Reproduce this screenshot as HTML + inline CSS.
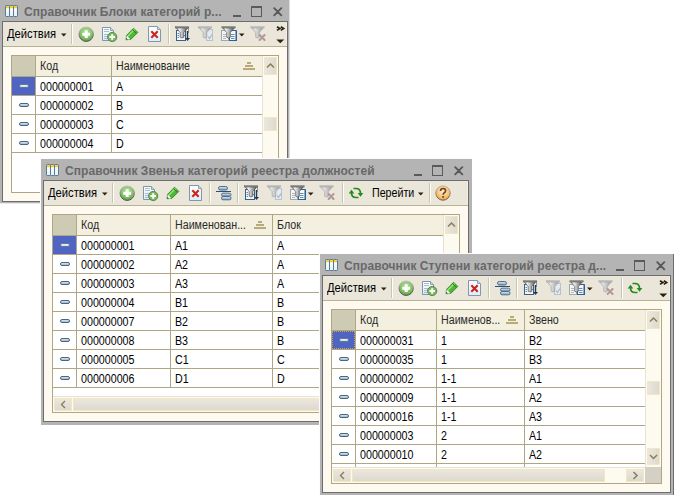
<!DOCTYPE html>
<html><head><meta charset="utf-8"><style>
html,body{margin:0;padding:0;background:#fff;width:674px;height:495px;overflow:hidden;position:relative}
div,span,svg{position:absolute}
.w div,.w span,.w svg{position:absolute}
.t{font-family:"Liberation Sans", sans-serif;white-space:pre}
</style></head><body>
<div class="w" style="left:0px;top:0px;z-index:1"><div style="left:0px;top:0px;width:289px;height:203px;background:#b4b4b4;"></div><div style="left:289px;top:0px;width:1px;height:203px;background:#dcdcdc;"></div><div style="left:0px;top:203px;width:290px;height:1px;background:#e8e8e8;"></div><svg style="left:5px;top:5px" width="14" height="12" viewBox="0 0 14 12"><defs><linearGradient id="gw" x1="0" y1="0" x2="0" y2="1"><stop offset="0" stop-color="#ffffff"/><stop offset="1" stop-color="#dff3fb"/></linearGradient></defs><rect x="0.5" y="0.5" width="4" height="11" rx="0.7" fill="url(#gw)" stroke="#62768a"/><rect x="1" y="1.2" width="3" height="2" fill="#f0d020"/><rect x="4.5" y="0.5" width="4" height="11" rx="0.7" fill="url(#gw)" stroke="#62768a"/><rect x="5" y="1.2" width="3" height="2" fill="#f0d020"/><rect x="8.5" y="0.5" width="4" height="11" rx="0.7" fill="url(#gw)" stroke="#62768a"/><rect x="9" y="1.2" width="3" height="2" fill="#f0d020"/></svg><span class="t" style="left:24px;top:5px;font-size:12px;line-height:14px;font-weight:700;color:#686868;letter-spacing:0.07px">Справочник Блоки категорий р...</span><div style="left:233px;top:15px;width:8px;height:2px;background:#5a5a5a;"></div><div style="left:251px;top:6px;width:11px;height:2px;background:#5a5a5a;"></div><div style="left:251px;top:6px;width:1px;height:11px;background:#5a5a5a;"></div><div style="left:261px;top:6px;width:1px;height:11px;background:#5a5a5a;"></div><div style="left:251px;top:16px;width:11px;height:1px;background:#5a5a5a;"></div><svg style="left:273px;top:7px" width="10" height="10" viewBox="0 0 10 10"><path d="M1.2 1.2L8.3 8.3M8.3 1.2L1.2 8.3" stroke="#585858" stroke-width="1.9" stroke-linecap="round"/></svg><div style="left:2px;top:21px;width:286px;height:181px;background:#6d6d6d;"></div><div style="left:3px;top:22px;width:284px;height:179px;background:#fefaf0;"></div><div style="left:3px;top:22px;width:284px;height:24px;background:#ebe6da;"></div><div style="left:3px;top:46px;width:284px;height:1px;background:#b8b294;"></div><div style="left:286px;top:22px;width:1px;height:24px;background:#f3efe3;"></div><span class="t" style="left:7px;top:27px;font-size:12px;line-height:14px;font-weight:400;color:#000;transform:scaleX(0.935);transform-origin:0 0;">Действия</span><svg style="left:61px;top:33px" width="6" height="4" viewBox="0 0 6 4"><path d="M0 0.5H5.5L2.75 3.5Z" fill="#2a2010"/></svg><div style="left:71px;top:24px;width:1px;height:20px;background:#c9c4ae;"></div><div style="left:72px;top:24px;width:1px;height:20px;background:#ffffff;"></div><svg style="left:78px;top:26px" width="17" height="17" viewBox="0 0 17 17"><defs><radialGradient id="gp" cx="0.5" cy="0.35" r="0.65"><stop offset="0" stop-color="#b4df9c"/><stop offset="0.6" stop-color="#88c56c"/><stop offset="1" stop-color="#5c9e45"/></radialGradient><linearGradient id="gpo" x1="0" y1="0" x2="0" y2="1"><stop offset="0" stop-color="#c0c0b8"/><stop offset="1" stop-color="#4a4a48"/></linearGradient></defs><circle cx="8.2" cy="8.2" r="7.2" fill="url(#gp)" stroke="url(#gpo)" stroke-width="1"/><path d="M8.2 4.3V12.1M4.3 8.2H12.1" stroke="#fff" stroke-width="3"/></svg><svg style="left:102px;top:27px" width="17" height="17" viewBox="0 0 17 17"><defs><linearGradient id="gd" x1="0" y1="0" x2="0" y2="1"><stop offset="0" stop-color="#ffffff"/><stop offset="1" stop-color="#dcebf6"/></linearGradient></defs><path d="M0.5 0.5H8.5L11.5 3.5V13.5H0.5Z" fill="url(#gd)" stroke="#7d95ad"/><path d="M8.5 0.5V3.5H11.5" fill="#c9d8e6" stroke="#8aa2b8"/><path d="M2 2.5H7M2 4.5H7M2 7.5H6M2 9.5H6M2 11.5H6" stroke="#a6bcd0"/><circle cx="10.2" cy="10" r="4.6" fill="#78bb5e" stroke="#4f7f44" stroke-width="0.9"/><path d="M10.2 7.2V12.8M7.4 10H13" stroke="#fff" stroke-width="2"/></svg><svg style="left:122px;top:24px" width="20" height="20" viewBox="0 0 20 20"><defs><linearGradient id="gpe" x1="0" y1="1" x2="1" y2="0" gradientTransform="rotate(0)"><stop offset="0" stop-color="#2f8f1f"/><stop offset="0.5" stop-color="#8fe070"/><stop offset="1" stop-color="#2f8f1f"/></linearGradient></defs><path d="M4 15.8L4.6 11.3L11.6 4.2L15.8 8.4L8.8 15.4Z" fill="#4cb835" stroke="#2d7d1e" stroke-width="0.8"/><path d="M5.5 12.5L12.5 5.5" stroke="#9ae27e" stroke-width="1.5"/><path d="M10.5 5.5L14.5 9.5" stroke="#2a7a1c" stroke-width="1"/><path d="M4.1 15.7L4.8 11.8L8.3 15.2Z" fill="#ffffff"/><path d="M4 15.8L4.3 13.8L6 15.5Z" fill="#1e5a14"/></svg><svg style="left:148px;top:26px" width="14" height="17" viewBox="0 0 14 17"><defs><linearGradient id="gdl" x1="0" y1="0" x2="0" y2="1"><stop offset="0" stop-color="#ffffff"/><stop offset="1" stop-color="#dcecf8"/></linearGradient></defs><path d="M0.5 0.5H9.5L12.5 3.5V15.5H0.5Z" fill="url(#gdl)" stroke="#8097ac"/><path d="M9.5 0.5V3.5H12.5" fill="#c9d8e6" stroke="#8aa2b8"/><path d="M3.3 5.3L9.7 11.7M9.7 5.3L3.3 11.7" stroke="#cc2418" stroke-width="2.1"/></svg><div style="left:168px;top:24px;width:1px;height:20px;background:#c9c4ae;"></div><div style="left:169px;top:24px;width:1px;height:20px;background:#ffffff;"></div><svg style="left:174px;top:26px" width="17" height="17" viewBox="0 0 17 17"><rect x="2.5" y="4.5" width="9" height="10" fill="#f2f7fc" stroke="#3d5f86"/><path d="M3.5 7.5H5M3.5 9.5H5M3.5 11.5H5M10 9.5H11" stroke="#6a86a8"/><defs><linearGradient id="gf0" x1="0" y1="0" x2="1" y2="0"><stop offset="0" stop-color="#9a9a9a"/><stop offset="0.3" stop-color="#f4f4f4"/><stop offset="0.62" stop-color="#a0a0a0"/><stop offset="1" stop-color="#4c4c4c"/></linearGradient><linearGradient id="gf0r" x1="0" y1="0" x2="0" y2="1"><stop offset="0" stop-color="#c8c8c8"/><stop offset="1" stop-color="#5a5a5a"/></linearGradient></defs><g transform="translate(1 0)"><path d="M0.5 1H13.5L8.8 6.6V11.2Q7 12.8 5.2 11.2V6.6Z" fill="url(#gf0)" stroke="#4e4e4e" stroke-width="0.7"/><rect x="0.3" y="0.3" width="13.4" height="1.8" fill="url(#gf0r)" stroke="#4e4e4e" stroke-width="0.4" stroke-opacity="0.7"/></g><path d="M14.5 1.5V6.5" stroke="#3a4a5a" stroke-dasharray="1 1"/><path d="M13.5 5V12.5" stroke="#1f3a5a" stroke-width="1.4"/><path d="M11 12H16L13.5 15Z" fill="#1f3a5a"/></svg><svg style="left:198px;top:26px" width="17" height="17" viewBox="0 0 17 17"><rect x="8.5" y="3.5" width="6" height="11" fill="#e6eaee" stroke="#b6c2cc"/><defs><linearGradient id="gf1" x1="0" y1="0" x2="1" y2="0"><stop offset="0" stop-color="#b4b4b4"/><stop offset="0.3" stop-color="#e6e6e6"/><stop offset="0.65" stop-color="#bcbcbc"/><stop offset="1" stop-color="#9c9c9c"/></linearGradient><linearGradient id="gf1r" x1="0" y1="0" x2="0" y2="1"><stop offset="0" stop-color="#d8d8d8"/><stop offset="1" stop-color="#a8a8a8"/></linearGradient></defs><g transform="translate(0 0)"><path d="M0.5 1H13.5L8.8 6.6V11.2Q7 12.8 5.2 11.2V6.6Z" fill="url(#gf1)" stroke="#a4a4a4" stroke-width="0.7"/><rect x="0.3" y="0.3" width="13.4" height="1.8" fill="url(#gf1r)" stroke="#a4a4a4" stroke-width="0.4" stroke-opacity="0.7"/></g><path d="M10 10.5L11.5 12.5L14 8.5" stroke="#a6b8c8" fill="none" stroke-width="1.2"/></svg><svg style="left:221px;top:26px" width="17" height="17" viewBox="0 0 17 17"><rect x="0.5" y="4.5" width="7" height="10" fill="#f2f4f6" stroke="#a0a8ae"/><rect x="8.5" y="4.5" width="6.5" height="10" fill="#f2f7fc" stroke="#2f5f95"/><path d="M15.5 4.5V15" stroke="#2f5f95"/><path d="M10 8.5H13.5M10 10.5H13.5M10 12.5H13.5" stroke="#6a8cb4"/><path d="M2 8.5H5M2 10.5H5M2 12.5H5" stroke="#b0b6ba"/><defs><linearGradient id="gf0" x1="0" y1="0" x2="1" y2="0"><stop offset="0" stop-color="#9a9a9a"/><stop offset="0.3" stop-color="#f4f4f4"/><stop offset="0.62" stop-color="#a0a0a0"/><stop offset="1" stop-color="#4c4c4c"/></linearGradient><linearGradient id="gf0r" x1="0" y1="0" x2="0" y2="1"><stop offset="0" stop-color="#c8c8c8"/><stop offset="1" stop-color="#5a5a5a"/></linearGradient></defs><g transform="translate(0.5 0)"><path d="M0.5 1H13.5L8.8 6.6V11.2Q7 12.8 5.2 11.2V6.6Z" fill="url(#gf0)" stroke="#4e4e4e" stroke-width="0.7"/><rect x="0.3" y="0.3" width="13.4" height="1.8" fill="url(#gf0r)" stroke="#4e4e4e" stroke-width="0.4" stroke-opacity="0.7"/></g></svg><svg style="left:239px;top:33px" width="6" height="4" viewBox="0 0 6 4"><path d="M0 0.5H5.5L2.75 3.5Z" fill="#2a2010"/></svg><svg style="left:250px;top:26px" width="17" height="17" viewBox="0 0 17 17"><defs><linearGradient id="gf1" x1="0" y1="0" x2="1" y2="0"><stop offset="0" stop-color="#b4b4b4"/><stop offset="0.3" stop-color="#e6e6e6"/><stop offset="0.65" stop-color="#bcbcbc"/><stop offset="1" stop-color="#9c9c9c"/></linearGradient><linearGradient id="gf1r" x1="0" y1="0" x2="0" y2="1"><stop offset="0" stop-color="#d8d8d8"/><stop offset="1" stop-color="#a8a8a8"/></linearGradient></defs><g transform="translate(0.5 0)"><path d="M0.5 1H13.5L8.8 6.6V11.2Q7 12.8 5.2 11.2V6.6Z" fill="url(#gf1)" stroke="#a4a4a4" stroke-width="0.7"/><rect x="0.3" y="0.3" width="13.4" height="1.8" fill="url(#gf1r)" stroke="#a4a4a4" stroke-width="0.4" stroke-opacity="0.7"/></g><path d="M9.6 9L14.6 14M14.6 9L9.6 14" stroke="#b39797" stroke-width="2" stroke-linecap="round"/></svg><svg style="left:276px;top:26px" width="10" height="18" viewBox="0 0 10 18"><path d="M1 0.8L3.8 2.6L1 4.4M4.8 0.8L7.6 2.6L4.8 4.4" fill="none" stroke="#2a2010" stroke-width="1.7"/><path d="M0.3 13.6H8.2L4.25 17.3Z" fill="#2a2010"/></svg><div style="left:11px;top:55px;width:268px;height:138px;background:#aea685;"></div><div style="left:12px;top:56px;width:266px;height:136px;background:#ffffff;"></div><div style="left:263px;top:56px;width:15px;height:136px;background:#fdfaf0;"></div><div style="left:262px;top:56px;width:1px;height:136px;background:#e6e2d6;"></div><div style="left:12px;top:56px;width:250px;height:20px;background:#f3f0df;"></div><div style="left:12px;top:56px;width:23px;height:20px;background:#cecbb5;"></div><div style="left:12px;top:76px;width:250px;height:1px;background:#aea685;"></div><div style="left:35px;top:56px;width:1px;height:20px;background:#aea685;"></div><div style="left:35px;top:76px;width:1px;height:76px;background:#aea685;"></div><div style="left:111px;top:56px;width:1px;height:96px;background:#aea685;"></div><div style="left:12px;top:95px;width:250px;height:1px;background:#aea685;"></div><div style="left:12px;top:114px;width:250px;height:1px;background:#aea685;"></div><div style="left:12px;top:133px;width:250px;height:1px;background:#aea685;"></div><div style="left:12px;top:152px;width:250px;height:1px;background:#aea685;"></div><span class="t" style="left:40px;top:59px;font-size:12px;line-height:14px;font-weight:400;color:#2a2a2a;transform:scaleX(0.89);transform-origin:0 0;">Код</span><span class="t" style="left:116px;top:59px;font-size:12px;line-height:14px;font-weight:400;color:#2a2a2a;transform:scaleX(0.89);transform-origin:0 0;">Наименование</span><div style="left:247px;top:62px;width:4px;height:2px;background:#b9ab78;"></div><div style="left:245px;top:65px;width:8px;height:2px;background:#b9ab78;"></div><div style="left:243px;top:68px;width:12px;height:2px;background:#b9ab78;"></div><div style="left:12px;top:77px;width:23px;height:18px;background:#5064c4;"></div><svg style="left:19px;top:84px" width="11" height="5" viewBox="0 0 11 5"><defs><linearGradient id="gms" x1="0" y1="0" x2="0" y2="1"><stop offset="0" stop-color="#f8fbfd"/><stop offset="1" stop-color="#c4d4e0"/></linearGradient></defs><rect x="0.5" y="0.5" width="9" height="3" rx="1.5" fill="url(#gms)" stroke="#5d7a92" stroke-width="1"/></svg><span class="t" style="left:40px;top:80px;font-size:12px;line-height:14px;font-weight:400;color:#000;transform:scaleX(0.89);transform-origin:0 0;">000000001</span><span class="t" style="left:116px;top:80px;font-size:12px;line-height:14px;font-weight:400;color:#000;transform:scaleX(0.89);transform-origin:0 0;">A</span><svg style="left:19px;top:103px" width="11" height="5" viewBox="0 0 11 5"><defs><linearGradient id="gm" x1="0" y1="0" x2="0" y2="1"><stop offset="0" stop-color="#eef5fa"/><stop offset="1" stop-color="#8eaac2"/></linearGradient></defs><rect x="0.5" y="0.5" width="9" height="3" rx="1.5" fill="url(#gm)" stroke="#48667f" stroke-width="1"/></svg><span class="t" style="left:40px;top:99px;font-size:12px;line-height:14px;font-weight:400;color:#000;transform:scaleX(0.89);transform-origin:0 0;">000000002</span><span class="t" style="left:116px;top:99px;font-size:12px;line-height:14px;font-weight:400;color:#000;transform:scaleX(0.89);transform-origin:0 0;">B</span><svg style="left:19px;top:122px" width="11" height="5" viewBox="0 0 11 5"><defs><linearGradient id="gm" x1="0" y1="0" x2="0" y2="1"><stop offset="0" stop-color="#eef5fa"/><stop offset="1" stop-color="#8eaac2"/></linearGradient></defs><rect x="0.5" y="0.5" width="9" height="3" rx="1.5" fill="url(#gm)" stroke="#48667f" stroke-width="1"/></svg><span class="t" style="left:40px;top:118px;font-size:12px;line-height:14px;font-weight:400;color:#000;transform:scaleX(0.89);transform-origin:0 0;">000000003</span><span class="t" style="left:116px;top:118px;font-size:12px;line-height:14px;font-weight:400;color:#000;transform:scaleX(0.89);transform-origin:0 0;">C</span><svg style="left:19px;top:141px" width="11" height="5" viewBox="0 0 11 5"><defs><linearGradient id="gm" x1="0" y1="0" x2="0" y2="1"><stop offset="0" stop-color="#eef5fa"/><stop offset="1" stop-color="#8eaac2"/></linearGradient></defs><rect x="0.5" y="0.5" width="9" height="3" rx="1.5" fill="url(#gm)" stroke="#48667f" stroke-width="1"/></svg><span class="t" style="left:40px;top:137px;font-size:12px;line-height:14px;font-weight:400;color:#000;transform:scaleX(0.89);transform-origin:0 0;">000000004</span><span class="t" style="left:116px;top:137px;font-size:12px;line-height:14px;font-weight:400;color:#000;transform:scaleX(0.89);transform-origin:0 0;">D</span><div style="left:264px;top:57px;width:13px;height:18px;background:linear-gradient(90deg,#ece8df,#ddd8cc);box-shadow:inset 0 0 0 1px #f0e8c4"></div><svg style="left:264px;top:57px" width="13" height="18" viewBox="0 0 13 18"><path d="M3.0 10.5L6.5 7.0L10.0 10.5" fill="none" stroke="#8a7d55" stroke-width="1.5"/></svg><div style="left:264px;top:117px;width:13px;height:14px;background:linear-gradient(90deg,#ece8df,#ddd8cc);box-shadow:inset 0 0 0 1px #f0e8c4"></div></div><div class="w" style="left:41px;top:159px;z-index:2"><div style="left:-1px;top:-1px;width:1px;height:267px;background:#fcfcfc;"></div><div style="left:-1px;top:-1px;width:432px;height:1px;background:#fcfcfc;"></div><div style="left:0px;top:0px;width:431px;height:266px;background:#b4b4b4;"></div><svg style="left:5px;top:5px" width="14" height="12" viewBox="0 0 14 12"><defs><linearGradient id="gw" x1="0" y1="0" x2="0" y2="1"><stop offset="0" stop-color="#ffffff"/><stop offset="1" stop-color="#dff3fb"/></linearGradient></defs><rect x="0.5" y="0.5" width="4" height="11" rx="0.7" fill="url(#gw)" stroke="#62768a"/><rect x="1" y="1.2" width="3" height="2" fill="#f0d020"/><rect x="4.5" y="0.5" width="4" height="11" rx="0.7" fill="url(#gw)" stroke="#62768a"/><rect x="5" y="1.2" width="3" height="2" fill="#f0d020"/><rect x="8.5" y="0.5" width="4" height="11" rx="0.7" fill="url(#gw)" stroke="#62768a"/><rect x="9" y="1.2" width="3" height="2" fill="#f0d020"/></svg><span class="t" style="left:24px;top:5px;font-size:12px;line-height:14px;font-weight:700;color:#686868;letter-spacing:0.07px">Справочник Звенья категорий реестра должностей</span><div style="left:373px;top:15px;width:8px;height:2px;background:#5a5a5a;"></div><div style="left:391px;top:6px;width:11px;height:2px;background:#5a5a5a;"></div><div style="left:391px;top:6px;width:1px;height:11px;background:#5a5a5a;"></div><div style="left:401px;top:6px;width:1px;height:11px;background:#5a5a5a;"></div><div style="left:391px;top:16px;width:11px;height:1px;background:#5a5a5a;"></div><svg style="left:413px;top:7px" width="10" height="10" viewBox="0 0 10 10"><path d="M1.2 1.2L8.3 8.3M8.3 1.2L1.2 8.3" stroke="#585858" stroke-width="1.9" stroke-linecap="round"/></svg><div style="left:2px;top:21px;width:426px;height:242px;background:#6d6d6d;"></div><div style="left:3px;top:22px;width:424px;height:240px;background:#fefaf0;"></div><div style="left:3px;top:22px;width:424px;height:24px;background:#ebe6da;"></div><div style="left:3px;top:46px;width:424px;height:1px;background:#b8b294;"></div><div style="left:426px;top:22px;width:1px;height:24px;background:#f3efe3;"></div><span class="t" style="left:7px;top:27px;font-size:12px;line-height:14px;font-weight:400;color:#000;transform:scaleX(0.935);transform-origin:0 0;">Действия</span><svg style="left:61px;top:33px" width="6" height="4" viewBox="0 0 6 4"><path d="M0 0.5H5.5L2.75 3.5Z" fill="#2a2010"/></svg><div style="left:71px;top:24px;width:1px;height:20px;background:#c9c4ae;"></div><div style="left:72px;top:24px;width:1px;height:20px;background:#ffffff;"></div><svg style="left:78px;top:26px" width="17" height="17" viewBox="0 0 17 17"><defs><radialGradient id="gp" cx="0.5" cy="0.35" r="0.65"><stop offset="0" stop-color="#b4df9c"/><stop offset="0.6" stop-color="#88c56c"/><stop offset="1" stop-color="#5c9e45"/></radialGradient><linearGradient id="gpo" x1="0" y1="0" x2="0" y2="1"><stop offset="0" stop-color="#c0c0b8"/><stop offset="1" stop-color="#4a4a48"/></linearGradient></defs><circle cx="8.2" cy="8.2" r="7.2" fill="url(#gp)" stroke="url(#gpo)" stroke-width="1"/><path d="M8.2 4.3V12.1M4.3 8.2H12.1" stroke="#fff" stroke-width="3"/></svg><svg style="left:102px;top:27px" width="17" height="17" viewBox="0 0 17 17"><defs><linearGradient id="gd" x1="0" y1="0" x2="0" y2="1"><stop offset="0" stop-color="#ffffff"/><stop offset="1" stop-color="#dcebf6"/></linearGradient></defs><path d="M0.5 0.5H8.5L11.5 3.5V13.5H0.5Z" fill="url(#gd)" stroke="#7d95ad"/><path d="M8.5 0.5V3.5H11.5" fill="#c9d8e6" stroke="#8aa2b8"/><path d="M2 2.5H7M2 4.5H7M2 7.5H6M2 9.5H6M2 11.5H6" stroke="#a6bcd0"/><circle cx="10.2" cy="10" r="4.6" fill="#78bb5e" stroke="#4f7f44" stroke-width="0.9"/><path d="M10.2 7.2V12.8M7.4 10H13" stroke="#fff" stroke-width="2"/></svg><svg style="left:122px;top:24px" width="20" height="20" viewBox="0 0 20 20"><defs><linearGradient id="gpe" x1="0" y1="1" x2="1" y2="0" gradientTransform="rotate(0)"><stop offset="0" stop-color="#2f8f1f"/><stop offset="0.5" stop-color="#8fe070"/><stop offset="1" stop-color="#2f8f1f"/></linearGradient></defs><path d="M4 15.8L4.6 11.3L11.6 4.2L15.8 8.4L8.8 15.4Z" fill="#4cb835" stroke="#2d7d1e" stroke-width="0.8"/><path d="M5.5 12.5L12.5 5.5" stroke="#9ae27e" stroke-width="1.5"/><path d="M10.5 5.5L14.5 9.5" stroke="#2a7a1c" stroke-width="1"/><path d="M4.1 15.7L4.8 11.8L8.3 15.2Z" fill="#ffffff"/><path d="M4 15.8L4.3 13.8L6 15.5Z" fill="#1e5a14"/></svg><svg style="left:148px;top:26px" width="14" height="17" viewBox="0 0 14 17"><defs><linearGradient id="gdl" x1="0" y1="0" x2="0" y2="1"><stop offset="0" stop-color="#ffffff"/><stop offset="1" stop-color="#dcecf8"/></linearGradient></defs><path d="M0.5 0.5H9.5L12.5 3.5V15.5H0.5Z" fill="url(#gdl)" stroke="#8097ac"/><path d="M9.5 0.5V3.5H12.5" fill="#c9d8e6" stroke="#8aa2b8"/><path d="M3.3 5.3L9.7 11.7M9.7 5.3L3.3 11.7" stroke="#cc2418" stroke-width="2.1"/></svg><div style="left:168px;top:24px;width:1px;height:20px;background:#c9c4ae;"></div><div style="left:169px;top:24px;width:1px;height:20px;background:#ffffff;"></div><svg style="left:175px;top:27px" width="16" height="15" viewBox="0 0 16 15"><defs><linearGradient id="gh" x1="0" y1="0" x2="0" y2="1"><stop offset="0" stop-color="#e3eef7"/><stop offset="1" stop-color="#7b9bb8"/></linearGradient></defs><rect x="2.5" y="0.5" width="9" height="3.5" rx="1.7" fill="url(#gh)" stroke="#4f6e8a"/><path d="M0 5.5H15" stroke="#2e4f6e" stroke-width="1"/><rect x="5.5" y="7.2" width="9.5" height="3" rx="1.5" fill="url(#gh)" stroke="#4f6e8a"/><rect x="5.5" y="10.5" width="9.5" height="3.3" rx="1.5" fill="url(#gh)" stroke="#4f6e8a"/></svg><div style="left:196px;top:24px;width:1px;height:20px;background:#c9c4ae;"></div><div style="left:197px;top:24px;width:1px;height:20px;background:#ffffff;"></div><svg style="left:202px;top:26px" width="17" height="17" viewBox="0 0 17 17"><rect x="2.5" y="4.5" width="9" height="10" fill="#f2f7fc" stroke="#3d5f86"/><path d="M3.5 7.5H5M3.5 9.5H5M3.5 11.5H5M10 9.5H11" stroke="#6a86a8"/><defs><linearGradient id="gf0" x1="0" y1="0" x2="1" y2="0"><stop offset="0" stop-color="#9a9a9a"/><stop offset="0.3" stop-color="#f4f4f4"/><stop offset="0.62" stop-color="#a0a0a0"/><stop offset="1" stop-color="#4c4c4c"/></linearGradient><linearGradient id="gf0r" x1="0" y1="0" x2="0" y2="1"><stop offset="0" stop-color="#c8c8c8"/><stop offset="1" stop-color="#5a5a5a"/></linearGradient></defs><g transform="translate(1 0)"><path d="M0.5 1H13.5L8.8 6.6V11.2Q7 12.8 5.2 11.2V6.6Z" fill="url(#gf0)" stroke="#4e4e4e" stroke-width="0.7"/><rect x="0.3" y="0.3" width="13.4" height="1.8" fill="url(#gf0r)" stroke="#4e4e4e" stroke-width="0.4" stroke-opacity="0.7"/></g><path d="M14.5 1.5V6.5" stroke="#3a4a5a" stroke-dasharray="1 1"/><path d="M13.5 5V12.5" stroke="#1f3a5a" stroke-width="1.4"/><path d="M11 12H16L13.5 15Z" fill="#1f3a5a"/></svg><svg style="left:226px;top:26px" width="17" height="17" viewBox="0 0 17 17"><rect x="8.5" y="3.5" width="6" height="11" fill="#e6eaee" stroke="#b6c2cc"/><defs><linearGradient id="gf1" x1="0" y1="0" x2="1" y2="0"><stop offset="0" stop-color="#b4b4b4"/><stop offset="0.3" stop-color="#e6e6e6"/><stop offset="0.65" stop-color="#bcbcbc"/><stop offset="1" stop-color="#9c9c9c"/></linearGradient><linearGradient id="gf1r" x1="0" y1="0" x2="0" y2="1"><stop offset="0" stop-color="#d8d8d8"/><stop offset="1" stop-color="#a8a8a8"/></linearGradient></defs><g transform="translate(0 0)"><path d="M0.5 1H13.5L8.8 6.6V11.2Q7 12.8 5.2 11.2V6.6Z" fill="url(#gf1)" stroke="#a4a4a4" stroke-width="0.7"/><rect x="0.3" y="0.3" width="13.4" height="1.8" fill="url(#gf1r)" stroke="#a4a4a4" stroke-width="0.4" stroke-opacity="0.7"/></g><path d="M10 10.5L11.5 12.5L14 8.5" stroke="#a6b8c8" fill="none" stroke-width="1.2"/></svg><svg style="left:249px;top:26px" width="17" height="17" viewBox="0 0 17 17"><rect x="0.5" y="4.5" width="7" height="10" fill="#f2f4f6" stroke="#a0a8ae"/><rect x="8.5" y="4.5" width="6.5" height="10" fill="#f2f7fc" stroke="#2f5f95"/><path d="M15.5 4.5V15" stroke="#2f5f95"/><path d="M10 8.5H13.5M10 10.5H13.5M10 12.5H13.5" stroke="#6a8cb4"/><path d="M2 8.5H5M2 10.5H5M2 12.5H5" stroke="#b0b6ba"/><defs><linearGradient id="gf0" x1="0" y1="0" x2="1" y2="0"><stop offset="0" stop-color="#9a9a9a"/><stop offset="0.3" stop-color="#f4f4f4"/><stop offset="0.62" stop-color="#a0a0a0"/><stop offset="1" stop-color="#4c4c4c"/></linearGradient><linearGradient id="gf0r" x1="0" y1="0" x2="0" y2="1"><stop offset="0" stop-color="#c8c8c8"/><stop offset="1" stop-color="#5a5a5a"/></linearGradient></defs><g transform="translate(0.5 0)"><path d="M0.5 1H13.5L8.8 6.6V11.2Q7 12.8 5.2 11.2V6.6Z" fill="url(#gf0)" stroke="#4e4e4e" stroke-width="0.7"/><rect x="0.3" y="0.3" width="13.4" height="1.8" fill="url(#gf0r)" stroke="#4e4e4e" stroke-width="0.4" stroke-opacity="0.7"/></g></svg><svg style="left:267px;top:33px" width="6" height="4" viewBox="0 0 6 4"><path d="M0 0.5H5.5L2.75 3.5Z" fill="#2a2010"/></svg><svg style="left:278px;top:26px" width="17" height="17" viewBox="0 0 17 17"><defs><linearGradient id="gf1" x1="0" y1="0" x2="1" y2="0"><stop offset="0" stop-color="#b4b4b4"/><stop offset="0.3" stop-color="#e6e6e6"/><stop offset="0.65" stop-color="#bcbcbc"/><stop offset="1" stop-color="#9c9c9c"/></linearGradient><linearGradient id="gf1r" x1="0" y1="0" x2="0" y2="1"><stop offset="0" stop-color="#d8d8d8"/><stop offset="1" stop-color="#a8a8a8"/></linearGradient></defs><g transform="translate(0.5 0)"><path d="M0.5 1H13.5L8.8 6.6V11.2Q7 12.8 5.2 11.2V6.6Z" fill="url(#gf1)" stroke="#a4a4a4" stroke-width="0.7"/><rect x="0.3" y="0.3" width="13.4" height="1.8" fill="url(#gf1r)" stroke="#a4a4a4" stroke-width="0.4" stroke-opacity="0.7"/></g><path d="M9.6 9L14.6 14M14.6 9L9.6 14" stroke="#b39797" stroke-width="2" stroke-linecap="round"/></svg><div style="left:301px;top:24px;width:1px;height:20px;background:#c9c4ae;"></div><div style="left:302px;top:24px;width:1px;height:20px;background:#ffffff;"></div><svg style="left:304px;top:24px" width="22" height="18" viewBox="0 0 22 18"><path d="M8.5 5.5H11Q15.5 5.5 15.5 10.5" fill="none" stroke="#248a18" stroke-width="1.7"/><path d="M12.7 10H18.3L15.5 13.8Z" fill="#248a18"/><path d="M6.5 10Q6.5 14.5 11 14.5H13.5" fill="none" stroke="#248a18" stroke-width="1.7"/><path d="M3.7 10.6H9.3L6.5 6.8Z" fill="#248a18"/></svg><span class="t" style="left:331px;top:27px;font-size:12px;line-height:14px;font-weight:400;color:#000;transform:scaleX(0.89);transform-origin:0 0;">Перейти</span><svg style="left:377px;top:33px" width="6" height="4" viewBox="0 0 6 4"><path d="M0 0.5H5.5L2.75 3.5Z" fill="#2a2010"/></svg><div style="left:388px;top:24px;width:1px;height:20px;background:#c9c4ae;"></div><div style="left:389px;top:24px;width:1px;height:20px;background:#ffffff;"></div><svg style="left:394px;top:26px" width="17" height="17" viewBox="0 0 17 17"><defs><radialGradient id="gq" cx="0.5" cy="0.4" r="0.6"><stop offset="0" stop-color="#fff3dc"/><stop offset="0.75" stop-color="#f6bb66"/><stop offset="1" stop-color="#e89a3c"/></radialGradient><linearGradient id="gqo" x1="0" y1="0" x2="0" y2="1"><stop offset="0" stop-color="#c8b8a0"/><stop offset="1" stop-color="#5a5048"/></linearGradient></defs><circle cx="8" cy="8" r="7.2" fill="url(#gq)" stroke="url(#gqo)" stroke-width="0.9"/><path d="M5.6 6Q5.6 3.5 8 3.5Q10.6 3.5 10.6 5.8Q10.6 7.2 9 8Q8.2 8.5 8.2 9.8" fill="none" stroke="#6b4422" stroke-width="1.6"/><rect x="7.3" y="11" width="1.8" height="1.7" fill="#6b4422"/></svg><div style="left:11px;top:55px;width:408px;height:199px;background:#aea685;"></div><div style="left:12px;top:56px;width:406px;height:197px;background:#ffffff;"></div><div style="left:403px;top:56px;width:15px;height:197px;background:#fdfaf0;"></div><div style="left:402px;top:56px;width:1px;height:197px;background:#e6e2d6;"></div><div style="left:12px;top:56px;width:390px;height:20px;background:#f3f0df;"></div><div style="left:12px;top:56px;width:23px;height:20px;background:#cecbb5;"></div><div style="left:12px;top:76px;width:390px;height:1px;background:#aea685;"></div><div style="left:35px;top:56px;width:1px;height:20px;background:#aea685;"></div><div style="left:35px;top:76px;width:1px;height:152px;background:#aea685;"></div><div style="left:129px;top:56px;width:1px;height:172px;background:#aea685;"></div><div style="left:231px;top:56px;width:1px;height:172px;background:#aea685;"></div><div style="left:12px;top:95px;width:390px;height:1px;background:#aea685;"></div><div style="left:12px;top:114px;width:390px;height:1px;background:#aea685;"></div><div style="left:12px;top:133px;width:390px;height:1px;background:#aea685;"></div><div style="left:12px;top:152px;width:390px;height:1px;background:#aea685;"></div><div style="left:12px;top:171px;width:390px;height:1px;background:#aea685;"></div><div style="left:12px;top:190px;width:390px;height:1px;background:#aea685;"></div><div style="left:12px;top:209px;width:390px;height:1px;background:#aea685;"></div><div style="left:12px;top:228px;width:390px;height:1px;background:#aea685;"></div><span class="t" style="left:40px;top:59px;font-size:12px;line-height:14px;font-weight:400;color:#2a2a2a;transform:scaleX(0.89);transform-origin:0 0;">Код</span><span class="t" style="left:134px;top:59px;font-size:12px;line-height:14px;font-weight:400;color:#2a2a2a;transform:scaleX(0.89);transform-origin:0 0;">Наименован...</span><span class="t" style="left:236px;top:59px;font-size:12px;line-height:14px;font-weight:400;color:#2a2a2a;transform:scaleX(0.89);transform-origin:0 0;">Блок</span><div style="left:217px;top:62px;width:4px;height:2px;background:#b9ab78;"></div><div style="left:215px;top:65px;width:8px;height:2px;background:#b9ab78;"></div><div style="left:213px;top:68px;width:12px;height:2px;background:#b9ab78;"></div><div style="left:12px;top:77px;width:23px;height:18px;background:#5064c4;"></div><svg style="left:19px;top:84px" width="11" height="5" viewBox="0 0 11 5"><defs><linearGradient id="gms" x1="0" y1="0" x2="0" y2="1"><stop offset="0" stop-color="#f8fbfd"/><stop offset="1" stop-color="#c4d4e0"/></linearGradient></defs><rect x="0.5" y="0.5" width="9" height="3" rx="1.5" fill="url(#gms)" stroke="#5d7a92" stroke-width="1"/></svg><span class="t" style="left:40px;top:80px;font-size:12px;line-height:14px;font-weight:400;color:#000;transform:scaleX(0.89);transform-origin:0 0;">000000001</span><span class="t" style="left:134px;top:80px;font-size:12px;line-height:14px;font-weight:400;color:#000;transform:scaleX(0.89);transform-origin:0 0;">A1</span><span class="t" style="left:236px;top:80px;font-size:12px;line-height:14px;font-weight:400;color:#000;transform:scaleX(0.89);transform-origin:0 0;">A</span><svg style="left:19px;top:103px" width="11" height="5" viewBox="0 0 11 5"><defs><linearGradient id="gm" x1="0" y1="0" x2="0" y2="1"><stop offset="0" stop-color="#eef5fa"/><stop offset="1" stop-color="#8eaac2"/></linearGradient></defs><rect x="0.5" y="0.5" width="9" height="3" rx="1.5" fill="url(#gm)" stroke="#48667f" stroke-width="1"/></svg><span class="t" style="left:40px;top:99px;font-size:12px;line-height:14px;font-weight:400;color:#000;transform:scaleX(0.89);transform-origin:0 0;">000000002</span><span class="t" style="left:134px;top:99px;font-size:12px;line-height:14px;font-weight:400;color:#000;transform:scaleX(0.89);transform-origin:0 0;">A2</span><span class="t" style="left:236px;top:99px;font-size:12px;line-height:14px;font-weight:400;color:#000;transform:scaleX(0.89);transform-origin:0 0;">A</span><svg style="left:19px;top:122px" width="11" height="5" viewBox="0 0 11 5"><defs><linearGradient id="gm" x1="0" y1="0" x2="0" y2="1"><stop offset="0" stop-color="#eef5fa"/><stop offset="1" stop-color="#8eaac2"/></linearGradient></defs><rect x="0.5" y="0.5" width="9" height="3" rx="1.5" fill="url(#gm)" stroke="#48667f" stroke-width="1"/></svg><span class="t" style="left:40px;top:118px;font-size:12px;line-height:14px;font-weight:400;color:#000;transform:scaleX(0.89);transform-origin:0 0;">000000003</span><span class="t" style="left:134px;top:118px;font-size:12px;line-height:14px;font-weight:400;color:#000;transform:scaleX(0.89);transform-origin:0 0;">A3</span><span class="t" style="left:236px;top:118px;font-size:12px;line-height:14px;font-weight:400;color:#000;transform:scaleX(0.89);transform-origin:0 0;">A</span><svg style="left:19px;top:141px" width="11" height="5" viewBox="0 0 11 5"><defs><linearGradient id="gm" x1="0" y1="0" x2="0" y2="1"><stop offset="0" stop-color="#eef5fa"/><stop offset="1" stop-color="#8eaac2"/></linearGradient></defs><rect x="0.5" y="0.5" width="9" height="3" rx="1.5" fill="url(#gm)" stroke="#48667f" stroke-width="1"/></svg><span class="t" style="left:40px;top:137px;font-size:12px;line-height:14px;font-weight:400;color:#000;transform:scaleX(0.89);transform-origin:0 0;">000000004</span><span class="t" style="left:134px;top:137px;font-size:12px;line-height:14px;font-weight:400;color:#000;transform:scaleX(0.89);transform-origin:0 0;">B1</span><span class="t" style="left:236px;top:137px;font-size:12px;line-height:14px;font-weight:400;color:#000;transform:scaleX(0.89);transform-origin:0 0;">B</span><svg style="left:19px;top:160px" width="11" height="5" viewBox="0 0 11 5"><defs><linearGradient id="gm" x1="0" y1="0" x2="0" y2="1"><stop offset="0" stop-color="#eef5fa"/><stop offset="1" stop-color="#8eaac2"/></linearGradient></defs><rect x="0.5" y="0.5" width="9" height="3" rx="1.5" fill="url(#gm)" stroke="#48667f" stroke-width="1"/></svg><span class="t" style="left:40px;top:156px;font-size:12px;line-height:14px;font-weight:400;color:#000;transform:scaleX(0.89);transform-origin:0 0;">000000007</span><span class="t" style="left:134px;top:156px;font-size:12px;line-height:14px;font-weight:400;color:#000;transform:scaleX(0.89);transform-origin:0 0;">B2</span><span class="t" style="left:236px;top:156px;font-size:12px;line-height:14px;font-weight:400;color:#000;transform:scaleX(0.89);transform-origin:0 0;">B</span><svg style="left:19px;top:179px" width="11" height="5" viewBox="0 0 11 5"><defs><linearGradient id="gm" x1="0" y1="0" x2="0" y2="1"><stop offset="0" stop-color="#eef5fa"/><stop offset="1" stop-color="#8eaac2"/></linearGradient></defs><rect x="0.5" y="0.5" width="9" height="3" rx="1.5" fill="url(#gm)" stroke="#48667f" stroke-width="1"/></svg><span class="t" style="left:40px;top:175px;font-size:12px;line-height:14px;font-weight:400;color:#000;transform:scaleX(0.89);transform-origin:0 0;">000000008</span><span class="t" style="left:134px;top:175px;font-size:12px;line-height:14px;font-weight:400;color:#000;transform:scaleX(0.89);transform-origin:0 0;">B3</span><span class="t" style="left:236px;top:175px;font-size:12px;line-height:14px;font-weight:400;color:#000;transform:scaleX(0.89);transform-origin:0 0;">B</span><svg style="left:19px;top:198px" width="11" height="5" viewBox="0 0 11 5"><defs><linearGradient id="gm" x1="0" y1="0" x2="0" y2="1"><stop offset="0" stop-color="#eef5fa"/><stop offset="1" stop-color="#8eaac2"/></linearGradient></defs><rect x="0.5" y="0.5" width="9" height="3" rx="1.5" fill="url(#gm)" stroke="#48667f" stroke-width="1"/></svg><span class="t" style="left:40px;top:194px;font-size:12px;line-height:14px;font-weight:400;color:#000;transform:scaleX(0.89);transform-origin:0 0;">000000005</span><span class="t" style="left:134px;top:194px;font-size:12px;line-height:14px;font-weight:400;color:#000;transform:scaleX(0.89);transform-origin:0 0;">C1</span><span class="t" style="left:236px;top:194px;font-size:12px;line-height:14px;font-weight:400;color:#000;transform:scaleX(0.89);transform-origin:0 0;">C</span><svg style="left:19px;top:217px" width="11" height="5" viewBox="0 0 11 5"><defs><linearGradient id="gm" x1="0" y1="0" x2="0" y2="1"><stop offset="0" stop-color="#eef5fa"/><stop offset="1" stop-color="#8eaac2"/></linearGradient></defs><rect x="0.5" y="0.5" width="9" height="3" rx="1.5" fill="url(#gm)" stroke="#48667f" stroke-width="1"/></svg><span class="t" style="left:40px;top:213px;font-size:12px;line-height:14px;font-weight:400;color:#000;transform:scaleX(0.89);transform-origin:0 0;">000000006</span><span class="t" style="left:134px;top:213px;font-size:12px;line-height:14px;font-weight:400;color:#000;transform:scaleX(0.89);transform-origin:0 0;">D1</span><span class="t" style="left:236px;top:213px;font-size:12px;line-height:14px;font-weight:400;color:#000;transform:scaleX(0.89);transform-origin:0 0;">D</span><div style="left:404px;top:57px;width:13px;height:18px;background:linear-gradient(90deg,#ece8df,#ddd8cc);box-shadow:inset 0 0 0 1px #f0e8c4"></div><svg style="left:404px;top:57px" width="13" height="18" viewBox="0 0 13 18"><path d="M3.0 10.5L6.5 7.0L10.0 10.5" fill="none" stroke="#8a7d55" stroke-width="1.5"/></svg><div style="left:12px;top:237px;width:406px;height:1px;background:#e6e2d6;"></div><div style="left:12px;top:238px;width:406px;height:15px;background:#fdfaf0;"></div><div style="left:13px;top:239px;width:18px;height:13px;background:linear-gradient(180deg,#ece8df,#ddd8cc);box-shadow:inset 0 0 0 1px #f0e8c4"></div><svg style="left:13px;top:239px" width="18" height="13" viewBox="0 0 18 13"><path d="M11.0 3.0L7.5 6.5L11.0 10.0" fill="none" stroke="#8a7d55" stroke-width="1.4"/></svg><div style="left:32px;top:239px;width:368px;height:13px;background:linear-gradient(180deg,#ece8df,#ddd8cc);box-shadow:inset 0 0 0 1px #f0e8c4"></div><div style="left:402px;top:237px;width:16px;height:16px;background:#d5d0c5;"></div></div><div class="w" style="left:320px;top:254px;z-index:3"><div style="left:-1px;top:-1px;width:1px;height:242px;background:#fcfcfc;"></div><div style="left:-1px;top:-1px;width:355px;height:1px;background:#fcfcfc;"></div><div style="left:0px;top:0px;width:354px;height:241px;background:#b4b4b4;"></div><div style="left:353px;top:0px;width:1px;height:241px;background:#6d6d6d;"></div><svg style="left:5px;top:5px" width="14" height="12" viewBox="0 0 14 12"><defs><linearGradient id="gw" x1="0" y1="0" x2="0" y2="1"><stop offset="0" stop-color="#ffffff"/><stop offset="1" stop-color="#dff3fb"/></linearGradient></defs><rect x="0.5" y="0.5" width="4" height="11" rx="0.7" fill="url(#gw)" stroke="#62768a"/><rect x="1" y="1.2" width="3" height="2" fill="#f0d020"/><rect x="4.5" y="0.5" width="4" height="11" rx="0.7" fill="url(#gw)" stroke="#62768a"/><rect x="5" y="1.2" width="3" height="2" fill="#f0d020"/><rect x="8.5" y="0.5" width="4" height="11" rx="0.7" fill="url(#gw)" stroke="#62768a"/><rect x="9" y="1.2" width="3" height="2" fill="#f0d020"/></svg><span class="t" style="left:24px;top:5px;font-size:12px;line-height:14px;font-weight:700;color:#686868;letter-spacing:0.07px">Справочник Ступени категорий реестра д...</span><div style="left:296px;top:15px;width:8px;height:2px;background:#5a5a5a;"></div><div style="left:314px;top:6px;width:11px;height:2px;background:#5a5a5a;"></div><div style="left:314px;top:6px;width:1px;height:11px;background:#5a5a5a;"></div><div style="left:324px;top:6px;width:1px;height:11px;background:#5a5a5a;"></div><div style="left:314px;top:16px;width:11px;height:1px;background:#5a5a5a;"></div><svg style="left:336px;top:7px" width="10" height="10" viewBox="0 0 10 10"><path d="M1.2 1.2L8.3 8.3M8.3 1.2L1.2 8.3" stroke="#585858" stroke-width="1.9" stroke-linecap="round"/></svg><div style="left:2px;top:21px;width:349px;height:218px;background:#6d6d6d;"></div><div style="left:3px;top:22px;width:347px;height:216px;background:#fefaf0;"></div><div style="left:3px;top:22px;width:347px;height:24px;background:#ebe6da;"></div><div style="left:3px;top:46px;width:347px;height:1px;background:#b8b294;"></div><div style="left:349px;top:22px;width:1px;height:24px;background:#f3efe3;"></div><span class="t" style="left:7px;top:27px;font-size:12px;line-height:14px;font-weight:400;color:#000;transform:scaleX(0.935);transform-origin:0 0;">Действия</span><svg style="left:61px;top:33px" width="6" height="4" viewBox="0 0 6 4"><path d="M0 0.5H5.5L2.75 3.5Z" fill="#2a2010"/></svg><div style="left:71px;top:24px;width:1px;height:20px;background:#c9c4ae;"></div><div style="left:72px;top:24px;width:1px;height:20px;background:#ffffff;"></div><svg style="left:78px;top:26px" width="17" height="17" viewBox="0 0 17 17"><defs><radialGradient id="gp" cx="0.5" cy="0.35" r="0.65"><stop offset="0" stop-color="#b4df9c"/><stop offset="0.6" stop-color="#88c56c"/><stop offset="1" stop-color="#5c9e45"/></radialGradient><linearGradient id="gpo" x1="0" y1="0" x2="0" y2="1"><stop offset="0" stop-color="#c0c0b8"/><stop offset="1" stop-color="#4a4a48"/></linearGradient></defs><circle cx="8.2" cy="8.2" r="7.2" fill="url(#gp)" stroke="url(#gpo)" stroke-width="1"/><path d="M8.2 4.3V12.1M4.3 8.2H12.1" stroke="#fff" stroke-width="3"/></svg><svg style="left:102px;top:27px" width="17" height="17" viewBox="0 0 17 17"><defs><linearGradient id="gd" x1="0" y1="0" x2="0" y2="1"><stop offset="0" stop-color="#ffffff"/><stop offset="1" stop-color="#dcebf6"/></linearGradient></defs><path d="M0.5 0.5H8.5L11.5 3.5V13.5H0.5Z" fill="url(#gd)" stroke="#7d95ad"/><path d="M8.5 0.5V3.5H11.5" fill="#c9d8e6" stroke="#8aa2b8"/><path d="M2 2.5H7M2 4.5H7M2 7.5H6M2 9.5H6M2 11.5H6" stroke="#a6bcd0"/><circle cx="10.2" cy="10" r="4.6" fill="#78bb5e" stroke="#4f7f44" stroke-width="0.9"/><path d="M10.2 7.2V12.8M7.4 10H13" stroke="#fff" stroke-width="2"/></svg><svg style="left:122px;top:24px" width="20" height="20" viewBox="0 0 20 20"><defs><linearGradient id="gpe" x1="0" y1="1" x2="1" y2="0" gradientTransform="rotate(0)"><stop offset="0" stop-color="#2f8f1f"/><stop offset="0.5" stop-color="#8fe070"/><stop offset="1" stop-color="#2f8f1f"/></linearGradient></defs><path d="M4 15.8L4.6 11.3L11.6 4.2L15.8 8.4L8.8 15.4Z" fill="#4cb835" stroke="#2d7d1e" stroke-width="0.8"/><path d="M5.5 12.5L12.5 5.5" stroke="#9ae27e" stroke-width="1.5"/><path d="M10.5 5.5L14.5 9.5" stroke="#2a7a1c" stroke-width="1"/><path d="M4.1 15.7L4.8 11.8L8.3 15.2Z" fill="#ffffff"/><path d="M4 15.8L4.3 13.8L6 15.5Z" fill="#1e5a14"/></svg><svg style="left:148px;top:26px" width="14" height="17" viewBox="0 0 14 17"><defs><linearGradient id="gdl" x1="0" y1="0" x2="0" y2="1"><stop offset="0" stop-color="#ffffff"/><stop offset="1" stop-color="#dcecf8"/></linearGradient></defs><path d="M0.5 0.5H9.5L12.5 3.5V15.5H0.5Z" fill="url(#gdl)" stroke="#8097ac"/><path d="M9.5 0.5V3.5H12.5" fill="#c9d8e6" stroke="#8aa2b8"/><path d="M3.3 5.3L9.7 11.7M9.7 5.3L3.3 11.7" stroke="#cc2418" stroke-width="2.1"/></svg><div style="left:168px;top:24px;width:1px;height:20px;background:#c9c4ae;"></div><div style="left:169px;top:24px;width:1px;height:20px;background:#ffffff;"></div><svg style="left:175px;top:27px" width="16" height="15" viewBox="0 0 16 15"><defs><linearGradient id="gh" x1="0" y1="0" x2="0" y2="1"><stop offset="0" stop-color="#e3eef7"/><stop offset="1" stop-color="#7b9bb8"/></linearGradient></defs><rect x="2.5" y="0.5" width="9" height="3.5" rx="1.7" fill="url(#gh)" stroke="#4f6e8a"/><path d="M0 5.5H15" stroke="#2e4f6e" stroke-width="1"/><rect x="5.5" y="7.2" width="9.5" height="3" rx="1.5" fill="url(#gh)" stroke="#4f6e8a"/><rect x="5.5" y="10.5" width="9.5" height="3.3" rx="1.5" fill="url(#gh)" stroke="#4f6e8a"/></svg><div style="left:196px;top:24px;width:1px;height:20px;background:#c9c4ae;"></div><div style="left:197px;top:24px;width:1px;height:20px;background:#ffffff;"></div><svg style="left:202px;top:26px" width="17" height="17" viewBox="0 0 17 17"><rect x="2.5" y="4.5" width="9" height="10" fill="#f2f7fc" stroke="#3d5f86"/><path d="M3.5 7.5H5M3.5 9.5H5M3.5 11.5H5M10 9.5H11" stroke="#6a86a8"/><defs><linearGradient id="gf0" x1="0" y1="0" x2="1" y2="0"><stop offset="0" stop-color="#9a9a9a"/><stop offset="0.3" stop-color="#f4f4f4"/><stop offset="0.62" stop-color="#a0a0a0"/><stop offset="1" stop-color="#4c4c4c"/></linearGradient><linearGradient id="gf0r" x1="0" y1="0" x2="0" y2="1"><stop offset="0" stop-color="#c8c8c8"/><stop offset="1" stop-color="#5a5a5a"/></linearGradient></defs><g transform="translate(1 0)"><path d="M0.5 1H13.5L8.8 6.6V11.2Q7 12.8 5.2 11.2V6.6Z" fill="url(#gf0)" stroke="#4e4e4e" stroke-width="0.7"/><rect x="0.3" y="0.3" width="13.4" height="1.8" fill="url(#gf0r)" stroke="#4e4e4e" stroke-width="0.4" stroke-opacity="0.7"/></g><path d="M14.5 1.5V6.5" stroke="#3a4a5a" stroke-dasharray="1 1"/><path d="M13.5 5V12.5" stroke="#1f3a5a" stroke-width="1.4"/><path d="M11 12H16L13.5 15Z" fill="#1f3a5a"/></svg><svg style="left:226px;top:26px" width="17" height="17" viewBox="0 0 17 17"><rect x="8.5" y="3.5" width="6" height="11" fill="#e6eaee" stroke="#b6c2cc"/><defs><linearGradient id="gf1" x1="0" y1="0" x2="1" y2="0"><stop offset="0" stop-color="#b4b4b4"/><stop offset="0.3" stop-color="#e6e6e6"/><stop offset="0.65" stop-color="#bcbcbc"/><stop offset="1" stop-color="#9c9c9c"/></linearGradient><linearGradient id="gf1r" x1="0" y1="0" x2="0" y2="1"><stop offset="0" stop-color="#d8d8d8"/><stop offset="1" stop-color="#a8a8a8"/></linearGradient></defs><g transform="translate(0 0)"><path d="M0.5 1H13.5L8.8 6.6V11.2Q7 12.8 5.2 11.2V6.6Z" fill="url(#gf1)" stroke="#a4a4a4" stroke-width="0.7"/><rect x="0.3" y="0.3" width="13.4" height="1.8" fill="url(#gf1r)" stroke="#a4a4a4" stroke-width="0.4" stroke-opacity="0.7"/></g><path d="M10 10.5L11.5 12.5L14 8.5" stroke="#a6b8c8" fill="none" stroke-width="1.2"/></svg><svg style="left:249px;top:26px" width="17" height="17" viewBox="0 0 17 17"><rect x="0.5" y="4.5" width="7" height="10" fill="#f2f4f6" stroke="#a0a8ae"/><rect x="8.5" y="4.5" width="6.5" height="10" fill="#f2f7fc" stroke="#2f5f95"/><path d="M15.5 4.5V15" stroke="#2f5f95"/><path d="M10 8.5H13.5M10 10.5H13.5M10 12.5H13.5" stroke="#6a8cb4"/><path d="M2 8.5H5M2 10.5H5M2 12.5H5" stroke="#b0b6ba"/><defs><linearGradient id="gf0" x1="0" y1="0" x2="1" y2="0"><stop offset="0" stop-color="#9a9a9a"/><stop offset="0.3" stop-color="#f4f4f4"/><stop offset="0.62" stop-color="#a0a0a0"/><stop offset="1" stop-color="#4c4c4c"/></linearGradient><linearGradient id="gf0r" x1="0" y1="0" x2="0" y2="1"><stop offset="0" stop-color="#c8c8c8"/><stop offset="1" stop-color="#5a5a5a"/></linearGradient></defs><g transform="translate(0.5 0)"><path d="M0.5 1H13.5L8.8 6.6V11.2Q7 12.8 5.2 11.2V6.6Z" fill="url(#gf0)" stroke="#4e4e4e" stroke-width="0.7"/><rect x="0.3" y="0.3" width="13.4" height="1.8" fill="url(#gf0r)" stroke="#4e4e4e" stroke-width="0.4" stroke-opacity="0.7"/></g></svg><svg style="left:267px;top:33px" width="6" height="4" viewBox="0 0 6 4"><path d="M0 0.5H5.5L2.75 3.5Z" fill="#2a2010"/></svg><svg style="left:278px;top:26px" width="17" height="17" viewBox="0 0 17 17"><defs><linearGradient id="gf1" x1="0" y1="0" x2="1" y2="0"><stop offset="0" stop-color="#b4b4b4"/><stop offset="0.3" stop-color="#e6e6e6"/><stop offset="0.65" stop-color="#bcbcbc"/><stop offset="1" stop-color="#9c9c9c"/></linearGradient><linearGradient id="gf1r" x1="0" y1="0" x2="0" y2="1"><stop offset="0" stop-color="#d8d8d8"/><stop offset="1" stop-color="#a8a8a8"/></linearGradient></defs><g transform="translate(0.5 0)"><path d="M0.5 1H13.5L8.8 6.6V11.2Q7 12.8 5.2 11.2V6.6Z" fill="url(#gf1)" stroke="#a4a4a4" stroke-width="0.7"/><rect x="0.3" y="0.3" width="13.4" height="1.8" fill="url(#gf1r)" stroke="#a4a4a4" stroke-width="0.4" stroke-opacity="0.7"/></g><path d="M9.6 9L14.6 14M14.6 9L9.6 14" stroke="#b39797" stroke-width="2" stroke-linecap="round"/></svg><div style="left:301px;top:24px;width:1px;height:20px;background:#c9c4ae;"></div><div style="left:302px;top:24px;width:1px;height:20px;background:#ffffff;"></div><svg style="left:304px;top:24px" width="22" height="18" viewBox="0 0 22 18"><path d="M8.5 5.5H11Q15.5 5.5 15.5 10.5" fill="none" stroke="#248a18" stroke-width="1.7"/><path d="M12.7 10H18.3L15.5 13.8Z" fill="#248a18"/><path d="M6.5 10Q6.5 14.5 11 14.5H13.5" fill="none" stroke="#248a18" stroke-width="1.7"/><path d="M3.7 10.6H9.3L6.5 6.8Z" fill="#248a18"/></svg><svg style="left:339px;top:26px" width="10" height="18" viewBox="0 0 10 18"><path d="M1 0.8L3.8 2.6L1 4.4M4.8 0.8L7.6 2.6L4.8 4.4" fill="none" stroke="#2a2010" stroke-width="1.7"/><path d="M0.3 13.6H8.2L4.25 17.3Z" fill="#2a2010"/></svg><div style="left:11px;top:55px;width:331px;height:175px;background:#aea685;"></div><div style="left:12px;top:56px;width:329px;height:173px;background:#ffffff;"></div><div style="left:326px;top:56px;width:15px;height:173px;background:#fdfaf0;"></div><div style="left:325px;top:56px;width:1px;height:173px;background:#e6e2d6;"></div><div style="left:12px;top:56px;width:313px;height:20px;background:#f3f0df;"></div><div style="left:12px;top:56px;width:23px;height:20px;background:#cecbb5;"></div><div style="left:12px;top:76px;width:313px;height:1px;background:#aea685;"></div><div style="left:35px;top:56px;width:1px;height:20px;background:#aea685;"></div><div style="left:35px;top:76px;width:1px;height:137px;background:#aea685;"></div><div style="left:116px;top:56px;width:1px;height:157px;background:#aea685;"></div><div style="left:204px;top:56px;width:1px;height:157px;background:#aea685;"></div><div style="left:12px;top:95px;width:313px;height:1px;background:#aea685;"></div><div style="left:12px;top:114px;width:313px;height:1px;background:#aea685;"></div><div style="left:12px;top:133px;width:313px;height:1px;background:#aea685;"></div><div style="left:12px;top:152px;width:313px;height:1px;background:#aea685;"></div><div style="left:12px;top:171px;width:313px;height:1px;background:#aea685;"></div><div style="left:12px;top:190px;width:313px;height:1px;background:#aea685;"></div><div style="left:12px;top:209px;width:313px;height:1px;background:#aea685;"></div><span class="t" style="left:40px;top:59px;font-size:12px;line-height:14px;font-weight:400;color:#2a2a2a;transform:scaleX(0.89);transform-origin:0 0;">Код</span><span class="t" style="left:121px;top:59px;font-size:12px;line-height:14px;font-weight:400;color:#2a2a2a;transform:scaleX(0.89);transform-origin:0 0;">Наименов...</span><span class="t" style="left:209px;top:59px;font-size:12px;line-height:14px;font-weight:400;color:#2a2a2a;transform:scaleX(0.89);transform-origin:0 0;">Звено</span><div style="left:190px;top:62px;width:4px;height:2px;background:#b9ab78;"></div><div style="left:188px;top:65px;width:8px;height:2px;background:#b9ab78;"></div><div style="left:186px;top:68px;width:12px;height:2px;background:#b9ab78;"></div><div style="left:12px;top:77px;width:23px;height:18px;background:#5064c4;"></div><div style="left:12px;top:77px;width:23px;height:18px;background:transparent;outline:1px dotted #c9a43c;outline-offset:-1px"></div><svg style="left:19px;top:84px" width="11" height="5" viewBox="0 0 11 5"><defs><linearGradient id="gms" x1="0" y1="0" x2="0" y2="1"><stop offset="0" stop-color="#f8fbfd"/><stop offset="1" stop-color="#c4d4e0"/></linearGradient></defs><rect x="0.5" y="0.5" width="9" height="3" rx="1.5" fill="url(#gms)" stroke="#5d7a92" stroke-width="1"/></svg><span class="t" style="left:40px;top:80px;font-size:12px;line-height:14px;font-weight:400;color:#000;transform:scaleX(0.89);transform-origin:0 0;">000000031</span><span class="t" style="left:121px;top:80px;font-size:12px;line-height:14px;font-weight:400;color:#000;transform:scaleX(0.89);transform-origin:0 0;">1</span><span class="t" style="left:209px;top:80px;font-size:12px;line-height:14px;font-weight:400;color:#000;transform:scaleX(0.89);transform-origin:0 0;">B2</span><svg style="left:19px;top:103px" width="11" height="5" viewBox="0 0 11 5"><defs><linearGradient id="gm" x1="0" y1="0" x2="0" y2="1"><stop offset="0" stop-color="#eef5fa"/><stop offset="1" stop-color="#8eaac2"/></linearGradient></defs><rect x="0.5" y="0.5" width="9" height="3" rx="1.5" fill="url(#gm)" stroke="#48667f" stroke-width="1"/></svg><span class="t" style="left:40px;top:99px;font-size:12px;line-height:14px;font-weight:400;color:#000;transform:scaleX(0.89);transform-origin:0 0;">000000035</span><span class="t" style="left:121px;top:99px;font-size:12px;line-height:14px;font-weight:400;color:#000;transform:scaleX(0.89);transform-origin:0 0;">1</span><span class="t" style="left:209px;top:99px;font-size:12px;line-height:14px;font-weight:400;color:#000;transform:scaleX(0.89);transform-origin:0 0;">B3</span><svg style="left:19px;top:122px" width="11" height="5" viewBox="0 0 11 5"><defs><linearGradient id="gm" x1="0" y1="0" x2="0" y2="1"><stop offset="0" stop-color="#eef5fa"/><stop offset="1" stop-color="#8eaac2"/></linearGradient></defs><rect x="0.5" y="0.5" width="9" height="3" rx="1.5" fill="url(#gm)" stroke="#48667f" stroke-width="1"/></svg><span class="t" style="left:40px;top:118px;font-size:12px;line-height:14px;font-weight:400;color:#000;transform:scaleX(0.89);transform-origin:0 0;">000000002</span><span class="t" style="left:121px;top:118px;font-size:12px;line-height:14px;font-weight:400;color:#000;transform:scaleX(0.89);transform-origin:0 0;">1-1</span><span class="t" style="left:209px;top:118px;font-size:12px;line-height:14px;font-weight:400;color:#000;transform:scaleX(0.89);transform-origin:0 0;">A1</span><svg style="left:19px;top:141px" width="11" height="5" viewBox="0 0 11 5"><defs><linearGradient id="gm" x1="0" y1="0" x2="0" y2="1"><stop offset="0" stop-color="#eef5fa"/><stop offset="1" stop-color="#8eaac2"/></linearGradient></defs><rect x="0.5" y="0.5" width="9" height="3" rx="1.5" fill="url(#gm)" stroke="#48667f" stroke-width="1"/></svg><span class="t" style="left:40px;top:137px;font-size:12px;line-height:14px;font-weight:400;color:#000;transform:scaleX(0.89);transform-origin:0 0;">000000009</span><span class="t" style="left:121px;top:137px;font-size:12px;line-height:14px;font-weight:400;color:#000;transform:scaleX(0.89);transform-origin:0 0;">1-1</span><span class="t" style="left:209px;top:137px;font-size:12px;line-height:14px;font-weight:400;color:#000;transform:scaleX(0.89);transform-origin:0 0;">A2</span><svg style="left:19px;top:160px" width="11" height="5" viewBox="0 0 11 5"><defs><linearGradient id="gm" x1="0" y1="0" x2="0" y2="1"><stop offset="0" stop-color="#eef5fa"/><stop offset="1" stop-color="#8eaac2"/></linearGradient></defs><rect x="0.5" y="0.5" width="9" height="3" rx="1.5" fill="url(#gm)" stroke="#48667f" stroke-width="1"/></svg><span class="t" style="left:40px;top:156px;font-size:12px;line-height:14px;font-weight:400;color:#000;transform:scaleX(0.89);transform-origin:0 0;">000000016</span><span class="t" style="left:121px;top:156px;font-size:12px;line-height:14px;font-weight:400;color:#000;transform:scaleX(0.89);transform-origin:0 0;">1-1</span><span class="t" style="left:209px;top:156px;font-size:12px;line-height:14px;font-weight:400;color:#000;transform:scaleX(0.89);transform-origin:0 0;">A3</span><svg style="left:19px;top:179px" width="11" height="5" viewBox="0 0 11 5"><defs><linearGradient id="gm" x1="0" y1="0" x2="0" y2="1"><stop offset="0" stop-color="#eef5fa"/><stop offset="1" stop-color="#8eaac2"/></linearGradient></defs><rect x="0.5" y="0.5" width="9" height="3" rx="1.5" fill="url(#gm)" stroke="#48667f" stroke-width="1"/></svg><span class="t" style="left:40px;top:175px;font-size:12px;line-height:14px;font-weight:400;color:#000;transform:scaleX(0.89);transform-origin:0 0;">000000003</span><span class="t" style="left:121px;top:175px;font-size:12px;line-height:14px;font-weight:400;color:#000;transform:scaleX(0.89);transform-origin:0 0;">2</span><span class="t" style="left:209px;top:175px;font-size:12px;line-height:14px;font-weight:400;color:#000;transform:scaleX(0.89);transform-origin:0 0;">A1</span><svg style="left:19px;top:198px" width="11" height="5" viewBox="0 0 11 5"><defs><linearGradient id="gm" x1="0" y1="0" x2="0" y2="1"><stop offset="0" stop-color="#eef5fa"/><stop offset="1" stop-color="#8eaac2"/></linearGradient></defs><rect x="0.5" y="0.5" width="9" height="3" rx="1.5" fill="url(#gm)" stroke="#48667f" stroke-width="1"/></svg><span class="t" style="left:40px;top:194px;font-size:12px;line-height:14px;font-weight:400;color:#000;transform:scaleX(0.89);transform-origin:0 0;">000000010</span><span class="t" style="left:121px;top:194px;font-size:12px;line-height:14px;font-weight:400;color:#000;transform:scaleX(0.89);transform-origin:0 0;">2</span><span class="t" style="left:209px;top:194px;font-size:12px;line-height:14px;font-weight:400;color:#000;transform:scaleX(0.89);transform-origin:0 0;">A2</span><div style="left:327px;top:57px;width:13px;height:18px;background:linear-gradient(90deg,#ece8df,#ddd8cc);box-shadow:inset 0 0 0 1px #f0e8c4"></div><svg style="left:327px;top:57px" width="13" height="18" viewBox="0 0 13 18"><path d="M3.0 10.5L6.5 7.0L10.0 10.5" fill="none" stroke="#8a7d55" stroke-width="1.5"/></svg><div style="left:327px;top:127px;width:13px;height:14px;background:linear-gradient(90deg,#ece8df,#ddd8cc);box-shadow:inset 0 0 0 1px #f0e8c4"></div><div style="left:327px;top:194px;width:13px;height:17px;background:linear-gradient(90deg,#ece8df,#ddd8cc);box-shadow:inset 0 0 0 1px #f0e8c4"></div><svg style="left:327px;top:194px" width="13" height="17" viewBox="0 0 13 17"><path d="M3.0 7.0L6.5 10.5L10.0 7.0" fill="none" stroke="#8a7d55" stroke-width="1.5"/></svg><div style="left:12px;top:213px;width:329px;height:1px;background:#e6e2d6;"></div><div style="left:12px;top:214px;width:329px;height:15px;background:#fdfaf0;"></div><div style="left:13px;top:215px;width:18px;height:13px;background:linear-gradient(180deg,#ece8df,#ddd8cc);box-shadow:inset 0 0 0 1px #f0e8c4"></div><svg style="left:13px;top:215px" width="18" height="13" viewBox="0 0 18 13"><path d="M11.0 3.0L7.5 6.5L11.0 10.0" fill="none" stroke="#8a7d55" stroke-width="1.4"/></svg><div style="left:32px;top:215px;width:253px;height:13px;background:linear-gradient(180deg,#ece8df,#ddd8cc);box-shadow:inset 0 0 0 1px #f0e8c4"></div><div style="left:306px;top:215px;width:18px;height:13px;background:linear-gradient(180deg,#ece8df,#ddd8cc);box-shadow:inset 0 0 0 1px #f0e8c4"></div><svg style="left:306px;top:215px" width="18" height="13" viewBox="0 0 18 13"><path d="M7.5 3.0L11.0 6.5L7.5 10.0" fill="none" stroke="#8a7d55" stroke-width="1.5"/></svg><div style="left:325px;top:213px;width:16px;height:16px;background:#d5d0c5;"></div></div>
</body></html>
